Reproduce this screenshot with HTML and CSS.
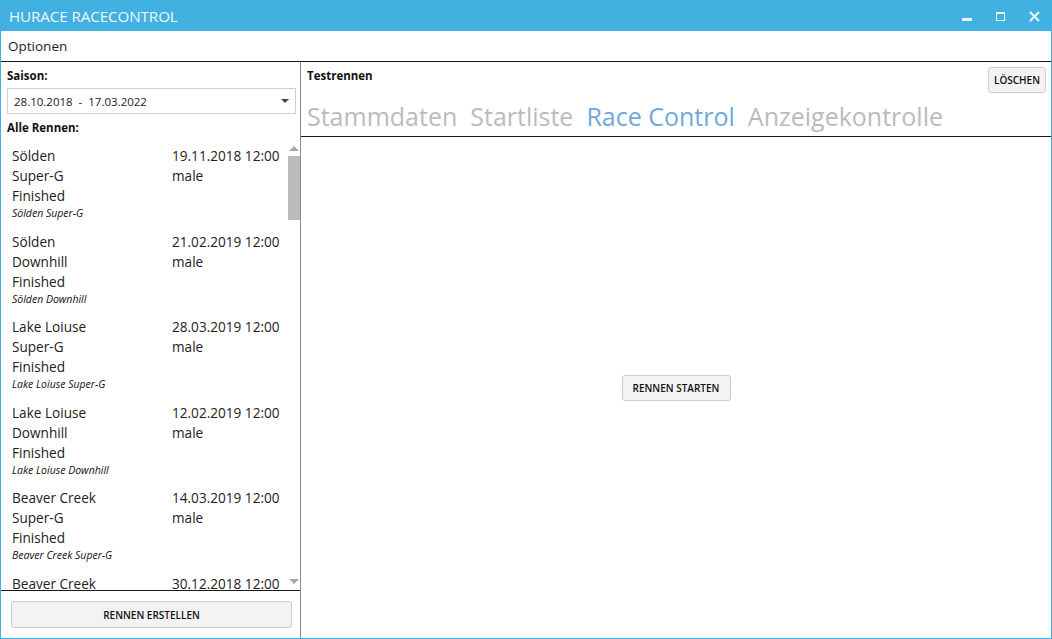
FILE: index.html
```html
<!DOCTYPE html>
<html lang="de">
<head>
<meta charset="utf-8">
<title>HURACE RACECONTROL</title>
<link rel="stylesheet" href="styles.css">
</head>
<body>
<div class="window">
  <header class="titlebar">
    <span class="title">HURACE RACECONTROL</span>
    <div class="controls">
      <svg class="ctl" width="34" height="31" viewBox="0 0 34 31"><rect x="12" y="18" width="10" height="3" fill="#eef7fc"/></svg>
      <svg class="ctl" width="34" height="31" viewBox="0 0 34 31"><rect x="12.5" y="12.5" width="8" height="8" fill="none" stroke="#eef7fc" stroke-width="1"/><rect x="12" y="12" width="9" height="2" fill="#eef7fc"/></svg>
      <svg class="ctl" width="34" height="31" viewBox="0 0 34 31"><path d="M12 12 L21 21 M21 12 L12 21" stroke="#eef7fc" stroke-width="2" fill="none"/></svg>
    </div>
  </header>
  <nav class="menubar"><span class="menu-item">Optionen</span></nav>
  <div class="main">
    <aside class="left">
      <div class="label">Saison:</div>
      <div class="combo">
        <span class="combo-text">28.10.2018&nbsp; -&nbsp; 17.03.2022</span>
        <svg width="8" height="4" viewBox="0 0 8 4"><path d="M0 0 L8 0 L4 4 Z" fill="#444"/></svg>
      </div>
      <div class="label label-list">Alle Rennen:</div>
      <div class="list-wrap">
        <div class="list">
          <div class="race">
            <div class="race-grid"><span>Sölden</span><span>19.11.2018 12:00</span><span>Super-G</span><span>male</span><span>Finished</span><span></span></div>
            <div class="race-desc">Sölden Super-G</div>
          </div>
          <div class="race">
            <div class="race-grid"><span>Sölden</span><span>21.02.2019 12:00</span><span>Downhill</span><span>male</span><span>Finished</span><span></span></div>
            <div class="race-desc">Sölden Downhill</div>
          </div>
          <div class="race">
            <div class="race-grid"><span>Lake Loiuse</span><span>28.03.2019 12:00</span><span>Super-G</span><span>male</span><span>Finished</span><span></span></div>
            <div class="race-desc">Lake Loiuse Super-G</div>
          </div>
          <div class="race">
            <div class="race-grid"><span>Lake Loiuse</span><span>12.02.2019 12:00</span><span>Downhill</span><span>male</span><span>Finished</span><span></span></div>
            <div class="race-desc">Lake Loiuse Downhill</div>
          </div>
          <div class="race">
            <div class="race-grid"><span>Beaver Creek</span><span>14.03.2019 12:00</span><span>Super-G</span><span>male</span><span>Finished</span><span></span></div>
            <div class="race-desc">Beaver Creek Super-G</div>
          </div>
          <div class="race">
            <div class="race-grid"><span>Beaver Creek</span><span>30.12.2018 12:00</span><span>Downhill</span><span>male</span><span>Finished</span><span></span></div>
            <div class="race-desc">Beaver Creek Downhill</div>
          </div>
        </div>
        <div class="scrollbar">
          <svg class="arrow" width="12" height="10" viewBox="0 0 12 10"><path d="M1 8 L6 3 L11 8 Z" fill="#a8a8a8"/></svg>
          <div class="thumb"></div>
          <div class="track"></div>
          <svg class="arrow" width="12" height="10" viewBox="0 0 12 10"><path d="M1 2 L6 7 L11 2 Z" fill="#a8a8a8"/></svg>
        </div>
      </div>
      <div class="left-footer">
        <button class="btn btn-wide">RENNEN ERSTELLEN</button>
      </div>
    </aside>
    <section class="right">
      <div class="right-head">
        <div class="head-row">
          <span class="label">Testrennen</span>
          <button class="btn btn-small">LÖSCHEN</button>
        </div>
        <div class="tabs">
          <span class="tab">Stammdaten</span>
          <span class="tab">Startliste</span>
          <span class="tab active">Race Control</span>
          <span class="tab">Anzeigekontrolle</span>
        </div>
      </div>
      <div class="content">
        <button class="btn btn-start">RENNEN STARTEN</button>
      </div>
    </section>
  </div>
</div>
</body>
</html>
```
FILE: styles.css
```css
* { box-sizing: border-box; }
html, body { margin: 0; padding: 0; background: #ffffff; }
body {
  font-family: "Open Sans", "Noto Sans", "Liberation Sans", sans-serif;
  color: #1e1e1e;
}
.window {
  width: 1052px;
  height: 639px;
  display: flex;
  flex-direction: column;
  background: #ffffff;
  border: 1px solid #41b1e1;
  border-top: 0;
  overflow: hidden;
}
.titlebar {
  height: 31px;
  margin: 0 -1px;
  background: #41b1e1;
  display: flex;
  align-items: center;
  justify-content: space-between;
  flex-shrink: 0;
}
.title {
  color: #eef7fc;
  font-size: 15.2px;
  padding-left: 9px;
  letter-spacing: -0.1px;
}
.controls { display: flex; }
.ctl { display: block; }
.menubar {
  height: 31px;
  border-bottom: 1px solid #1a1a1a;
  display: flex;
  align-items: center;
  flex-shrink: 0;
}
.menu-item {
  font-size: 13.5px;
  padding-left: 7px;
  color: #1e1e1e;
}
.main {
  flex: 1;
  display: flex;
  min-height: 0;
}
.left {
  width: 300px;
  border-right: 1px solid #8a8a8a;
  display: flex;
  flex-direction: column;
  flex-shrink: 0;
}
.label {
  font-size: 11.5px;
  font-weight: 700;
  line-height: 16px;
  color: #111;
}
.left > .label { padding-left: 6px; margin-top: 6px; }
.combo {
  margin: 4px 4px 0 6px;
  height: 26px;
  border: 1px solid #cfcfcf;
  display: flex;
  align-items: center;
  justify-content: space-between;
  padding: 0 6px 0 6px;
}
.combo-text { font-size: 11.5px; color: #222; }
.label-list { margin-top: 6px; }
.list-wrap {
  flex: 1;
  min-height: 0;
  display: flex;
  border-bottom: 1px solid #1a1a1a;
  margin-top: 6px;
}
.list {
  flex: 1;
  overflow: hidden;
}
.race {
  padding: 4px 0 6.6px 11px;
}
.race-grid {
  display: grid;
  grid-template-columns: 160px 1fr;
  font-size: 13.6px;
  line-height: 20px;
  color: #222;
  white-space: nowrap;
}
.race-desc {
  font-size: 10.5px;
  font-style: italic;
  line-height: 15px;
  color: #111;
}
.scrollbar {
  width: 12px;
  display: flex;
  flex-direction: column;
  align-items: center;
}
.arrow { display: block; flex-shrink: 0; }
.scrollbar .arrow:first-child { margin-top: 1px; }
.thumb {
  width: 12px;
  height: 64px;
  background: #bcbcbc;
  margin-top: 3px;
}
.track { flex: 1; }
.scrollbar .arrow:last-child { margin-bottom: 3px; }
.left-footer {
  height: 47px;
  display: flex;
  align-items: center;
  padding: 0 8px 0 10px;
}
.btn {
  font-family: "Open Sans", "Noto Sans", "Liberation Sans", sans-serif;
  font-weight: 600;
  font-size: 10px;
  color: #111;
  background: #f3f3f3;
  border: 1px solid #cccccc;
  border-radius: 3px;
  padding: 0;
  cursor: default;
}
.btn-wide { width: 281px; height: 27px; }
.btn-small { width: 58px; height: 26px; }
.btn-start { width: 109px; height: 26px; }
.right {
  flex: 1;
  display: flex;
  flex-direction: column;
  min-width: 0;
}
.right-head {
  border-bottom: 1px solid #1a1a1a;
  padding: 5px 5px 0 6px;
  height: 75px;
  flex-shrink: 0;
}
.head-row {
  display: flex;
  justify-content: space-between;
  align-items: flex-start;
}
.head-row .label { margin-top: 1px; }
.tabs {
  display: flex;
  gap: 13px;
  margin-top: 6px;
  white-space: nowrap;
}
.tab {
  font-size: 25px;
  line-height: 34px;
  color: #bbbbbb;
  letter-spacing: 0;
}
.tab.active { color: #6fa8dc; }
.content {
  flex: 1;
  display: flex;
  align-items: center;
  justify-content: center;
}
```
